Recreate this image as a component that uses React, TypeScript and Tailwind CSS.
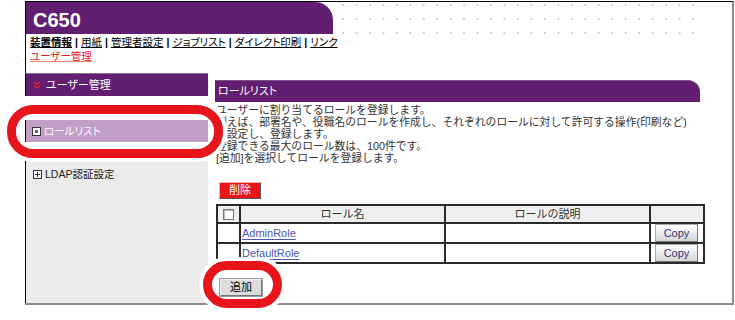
import React from "react";

const PURPLE = "bg-[#621f71]";

function ChevronDouble() {
  return (
    <svg width="8" height="8" viewBox="0 0 8 8">
      <polyline points="1,1 4,3.5 7,1" fill="none" stroke="#e8202a" strokeWidth="1.6" />
      <polyline points="1,4.5 4,7 7,4.5" fill="none" stroke="#e8202a" strokeWidth="1.6" />
    </svg>
  );
}

function BoxIcon({ plus }: { plus?: boolean }) {
  return (
    <svg width="9" height="9" viewBox="0 0 9 9">
      <rect x="0.5" y="0.5" width="8" height="8" fill="#fff" stroke="#333" strokeWidth="1" />
      {plus ? (
        <>
          <line x1="2" y1="4.5" x2="7" y2="4.5" stroke="#333" strokeWidth="1" />
          <line x1="4.5" y1="2" x2="4.5" y2="7" stroke="#333" strokeWidth="1" />
        </>
      ) : (
        <rect x="3" y="3" width="3" height="3" fill="#666" />
      )}
    </svg>
  );
}

export default function App() {
  const dots: React.ReactElement[] = [];
  for (let r = 0; r < 3; r++) {
    for (let c = 0; c < 27; c++) {
      dots.push(
        <rect key={`${r}-${c}`} x={9 + c * 13.46} y={2 + r * 14} width="2" height="2" fill="#d2d2d2" />
      );
    }
  }
  const navItems = ["装置情報", "用紙", "管理者設定", "ジョブリスト", "ダイレクト印刷", "リンク"];

  return (
    <div className="relative w-[735px] h-[320px] overflow-hidden bg-white font-['Liberation_Sans','Noto_Sans_CJK_JP',sans-serif]">
      <div className="ml-[25px] mt-[1px] w-[709px] h-[304px] border-t border-t-black border-r-2 border-r-[#8c8c8c] border-b-2 border-b-[#8c8c8c] flex flex-col">
        <div className="border-l border-black pb-[10px]">
          <div className="flex h-[32px]">
            <div className={`w-[307px] h-full ${PURPLE} rounded-tr-[18px] pl-[7px] pt-[8px] text-white font-bold text-[20px] leading-[20px]`}>
              C650
            </div>
            <svg className="overflow-visible" width="380" height="32">
              {dots}
            </svg>
          </div>
          <div className="pl-[4px] pt-[1px] text-[10.5px] leading-[14px] [font-feature-settings:'palt']">
            <div className="flex items-center text-black whitespace-nowrap">
              {navItems.map((n, i) => (
                <React.Fragment key={n}>
                  {i > 0 && <span className="mx-[3px] font-bold">|</span>}
                  <span className={`underline underline-offset-[1px] ${i === 0 ? "font-bold" : ""}`}>{n}</span>
                </React.Fragment>
              ))}
            </div>
            <div>
              <span className="text-[#e0141b] underline underline-offset-[1px] decoration-[#f0806a]">ユーザー管理</span>
            </div>
          </div>
        </div>

        <div className="flex flex-1">
          {/* sidebar */}
          <div className="w-[183px] flex flex-col [font-feature-settings:'palt']">
            <div className={`h-[23px] ${PURPLE} border-l border-l-black border-t border-t-[#8a6a94] flex items-center pl-[7px]`}>
              <ChevronDouble />
              <span className="ml-[5px] text-white text-[11px] leading-none">ユーザー管理</span>
            </div>
            <div className="h-[24px]" />
            <div className="h-[22px] bg-[#c09ec5] border-l border-black flex items-center pl-[6px]">
              <BoxIcon />
              <span className="ml-[3px] text-white text-[10.5px] leading-none">ロールリスト</span>
            </div>
            <div className="h-[19px]" />
            <div className="flex-1 bg-[#ebebea] border-l border-black pt-[8px] pl-[7px]">
              <div className="flex items-center">
                <BoxIcon plus />
                <span className="ml-[3px] text-[#222] text-[10.5px] leading-none">LDAP認証設定</span>
              </div>
            </div>
          </div>

          {/* main */}
          <div className="ml-[7px] w-[488px] flex flex-col items-start">
            <div className={`mt-[7px] w-[485px] h-[22px] ${PURPLE} border-t border-t-[#80508c] rounded-tr-[12px] pl-[3px] text-white text-[11px] leading-[20px] [font-feature-settings:'palt']`}>
              ロールリスト
            </div>
            <div className="mt-[2px] pl-[1px] text-[10.8px] leading-[12px] text-[#333] whitespace-nowrap">
              <div>ユーザーに割り当てるロールを登録します。</div>
              <div>例えば、部署名や、役職名のロールを作成し、それぞれのロールに対して許可する操作(印刷など)</div>
              <div>を設定し、登録します。</div>
              <div>登録できる最大のロール数は、100件です。</div>
              <div>[追加]を選択してロールを登録します。</div>
            </div>
            <button className="mt-[18px] ml-[4px] w-[42px] h-[17px] bg-[#e8141b] text-white text-[11px] leading-none border border-t-[#f3b0b0] border-l-[#f3b0b0] border-r-[#555] border-b-[#555]">
              削除
            </button>
            <table className="mt-[5px] ml-[1px] w-[487px] table-fixed border-collapse border-2 border-[#2a2a2a] text-[11px]">
              <colgroup>
                <col className="w-[23px]" />
                <col className="w-[205px]" />
                <col className="w-[205px]" />
                <col className="w-[54px]" />
              </colgroup>
              <thead>
                <tr className="bg-[#efefef] text-[#333]">
                  <td className="h-[18px] border-2 border-[#2a2a2a] p-0">
                    <div className="mx-auto w-[11px] h-[11px] border border-[#777] bg-white shadow-[inset_1px_1px_0_#bbb]" />
                  </td>
                  <td className="border-2 border-[#2a2a2a] text-center p-0 leading-none">ロール名</td>
                  <td className="border-2 border-[#2a2a2a] text-center p-0 leading-none">ロールの説明</td>
                  <td className="border-2 border-[#2a2a2a] p-0" />
                </tr>
              </thead>
              <tbody>
                {["AdminRole", "DefaultRole"].map((r) => (
                  <tr key={r}>
                    <td className="h-[20px] border-2 border-[#2a2a2a] p-0" />
                    <td className="border-2 border-[#2a2a2a] p-0 pl-[1px] pt-[1px] align-middle leading-none">
                      <span className="text-[#4a55b0] underline underline-offset-[2px]">{r}</span>
                    </td>
                    <td className="border-2 border-[#2a2a2a] p-0" />
                    <td className="border-2 border-[#2a2a2a] p-0 align-top">
                      <div className="ml-[4px] w-[43px] h-[18px] bg-gradient-to-b from-white to-[#d6d6d6] border border-[#a8a8a8] border-r-[#777] border-b-[#777] text-[#2b3a6e] text-[11px] leading-[16px] text-center">
                        Copy
                      </div>
                    </td>
                  </tr>
                ))}
              </tbody>
            </table>
            <button className="mt-[15px] ml-[5px] w-[42px] h-[17px] bg-[#dcdcdc] text-black text-[11px] leading-none border border-t-[#f4f4f4] border-l-[#f4f4f4] border-r-[#777] border-b-[#777] shadow-[0_0_0_1px_#999]">
              追加
            </button>
          </div>
        </div>
      </div>

      {/* annotations */}
      <div className="absolute left-[7px] top-[105px] w-[216px] h-[53px] border-[9px] border-[#e8141b] rounded-[26px] shadow-[0_0_0_4px_#fff]" />
      <div className="absolute left-[203px] top-[261px] w-[79px] h-[47px] border-[9px] border-[#e8141b] rounded-[24px] shadow-[0_0_0_4px_#fff]" />
    </div>
  );
}
